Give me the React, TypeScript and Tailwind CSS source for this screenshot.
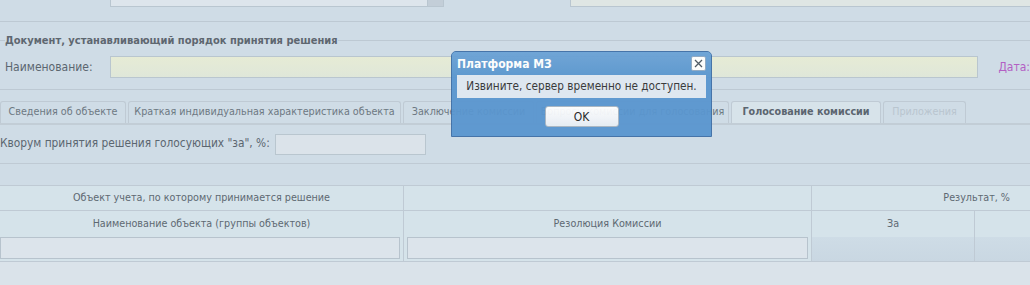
import React from "react";

const tabs = [
  { label: "Сведения об объекте", w: "w-[126px]" },
  { label: "Краткая индивидуальная характеристика объекта", w: "w-[273px]" },
  { label: "Заключение комиссии", w: "w-[131px]" },
  { label: "Вопросы комиссии для голосования", w: "w-[193px]" },
  { label: "Голосование комиссии", w: "w-[150px]", active: true },
  { label: "Приложения", w: "w-[83px]", disabled: true },
];

const App = () => {
  return (
    <div
      className="relative w-[1030px] h-[285px] overflow-hidden bg-[#cfdce6] text-[12px] text-[#5b6670]"
      style={{ fontFamily: "Tahoma, 'DejaVu Sans Condensed', 'Liberation Sans', sans-serif" }}
    >
      {/* верхняя строка (обрезана) */}
      <div className="flex h-[22px] items-start border-b border-[#bdc9d3]">
        <div className="flex h-[7px] ml-[110px]">
          <div className="w-[318px] h-full bg-[#dde5ec] border border-t-0 border-[#b9c6d0]" />
          <div className="w-[16px] h-full bg-[#c3ced8] border-b border-r border-[#b9c6d0]" />
        </div>
        <div className="w-[126px]" />
        <div className="flex-1 h-[7px] bg-[#dfe6e4] border border-t-0 border-r-0 border-[#b9c6d0]" />
      </div>

      {/* блок документа */}
      <div className="h-[68px] pt-[11px] border-b border-[#bdc9d3]">
        <div className="flex items-center h-[15px]">
          <div className="w-[5px] border-t border-[#bdc9d3]" />
          <span className="font-bold text-[11px] text-[#5e6770] leading-[15px]">
            Документ, устанавливающий порядок принятия решения
          </span>
          <div className="flex-1 border-t border-[#bdc9d3]" />
        </div>
        <div className="flex items-center mt-[8px] h-[22px]">
          <span className="w-[110px] pl-[5px]">Наименование:</span>
          <div className="w-[869px] h-[22px] border border-[#b9c6cf] bg-gradient-to-b from-[#e6ebd5] to-[#dfe7d9]" />
          <span className="ml-[20px] text-[#b35fc4]">Дата:</span>
        </div>
      </div>
      <div className="h-[11px]" />

      {/* вкладки */}
      <div className="flex items-end h-[24px] gap-[2px] border-b-2 border-[#c2cdd6]">
        {tabs.map((t) => (
          <div
            key={t.label}
            className={`${t.w} h-[22px] flex items-center justify-center rounded-t-[3px] border border-b-0 border-[#bfcad4] whitespace-nowrap overflow-hidden text-[10.7px] ${
              t.active
                ? "bg-[#d7e3ea] font-bold text-[#5b6570]"
                : t.disabled
                ? "bg-[#cfdce6] text-[#b9c5cf]"
                : "bg-[#cfdce6] text-[#6d7882]"
            }`}
          >
            {t.label}
          </div>
        ))}
        <div className="flex-1" />
      </div>

      {/* кворум */}
      <div className="flex items-center h-[39px] border-b border-[#bfcad4]">
        <span className="w-[275px] text-[11.8px]">Кворум принятия решения голосующих "за", %:</span>
        <div className="w-[151px] h-[21px] border border-[#b9c6cf] bg-[#dbe3ea]" />
      </div>

      <div className="h-[21px]" />

      {/* таблица */}
      <div className="border-t border-[#bfcad4] bg-[#d5e3ea] text-[10.7px] text-[#5e6972]">
        <div className="flex h-[25px] border-b border-[#bfcad4]">
          <div className="w-[404px] flex items-center justify-center border-r border-[#bfcad4]">
            Объект учета, по которому принимается решение
          </div>
          <div className="w-[408px] border-r border-[#bfcad4]" />
          <div className="flex-1 flex items-center justify-end pr-[20px]">Результат, %</div>
        </div>
        <div className="flex h-[26px]">
          <div className="w-[404px] flex items-center justify-center border-r border-[#bfcad4]">
            Наименование объекта (группы объектов)
          </div>
          <div className="w-[408px] flex items-center justify-center border-r border-[#bfcad4]">
            Резолюция Комиссии
          </div>
          <div className="w-[163px] flex items-center justify-center border-r border-[#bfcad4]">За</div>
          <div className="flex-1" />
        </div>
        <div className="flex h-[25px] border-b border-[#bfcad4]">
          <div className="w-[404px] pr-[3px] border-r border-[#bfcad4]">
            <div className="h-[22px] border border-[#b7c3cd] bg-[#dce4eb]" />
          </div>
          <div className="w-[408px] px-[3px] border-r border-[#bfcad4]">
            <div className="h-[22px] border border-[#b7c3cd] bg-[#dce4eb]" />
          </div>
          <div className="w-[163px] border-r border-[#bfcad4] bg-gradient-to-b from-[#cedce6] to-[#c9d7e2]" />
          <div className="flex-1 bg-gradient-to-b from-[#cedce6] to-[#c9d7e2]" />
        </div>
      </div>
      <div className="h-[40px] bg-[#dae3ea]" />

      {/* диалог */}
      <div className="absolute left-[451px] top-[51px] w-[261px] h-[86px] rounded-t-[5px] border border-[#3f6fa6] bg-[#5a96cf] opacity-95">
        <div className="flex items-center justify-between h-[23px] px-[5px] rounded-t-[4px] bg-gradient-to-b from-[#6ba3d6] to-[#5a96cf]">
          <span className="font-bold text-white text-[12px]">Платформа МЗ</span>
          <div className="w-[15px] h-[15px] bg-white rounded-[2px] border border-[#8fa9c4] flex items-center justify-center">
            <svg width="9" height="9" viewBox="0 0 9 9">
              <path d="M1 1 L8 8 M8 1 L1 8" stroke="#4a5560" strokeWidth="1.3" />
            </svg>
          </div>
        </div>
        <div className="mx-[5px] h-[23px] bg-[#dfe8f1] flex items-center justify-center text-[#333] text-[11.7px]">
          Извините, сервер временно не доступен.
        </div>
        <div className="flex justify-center mt-[8px]">
          <div className="w-[74px] h-[21px] rounded-[3px] border border-[#a9b6c2] bg-gradient-to-b from-white to-[#e8eef4] flex items-center justify-center text-[#222] text-[12px]">
            OK
          </div>
        </div>
      </div>
    </div>
  );
};

export default App;
